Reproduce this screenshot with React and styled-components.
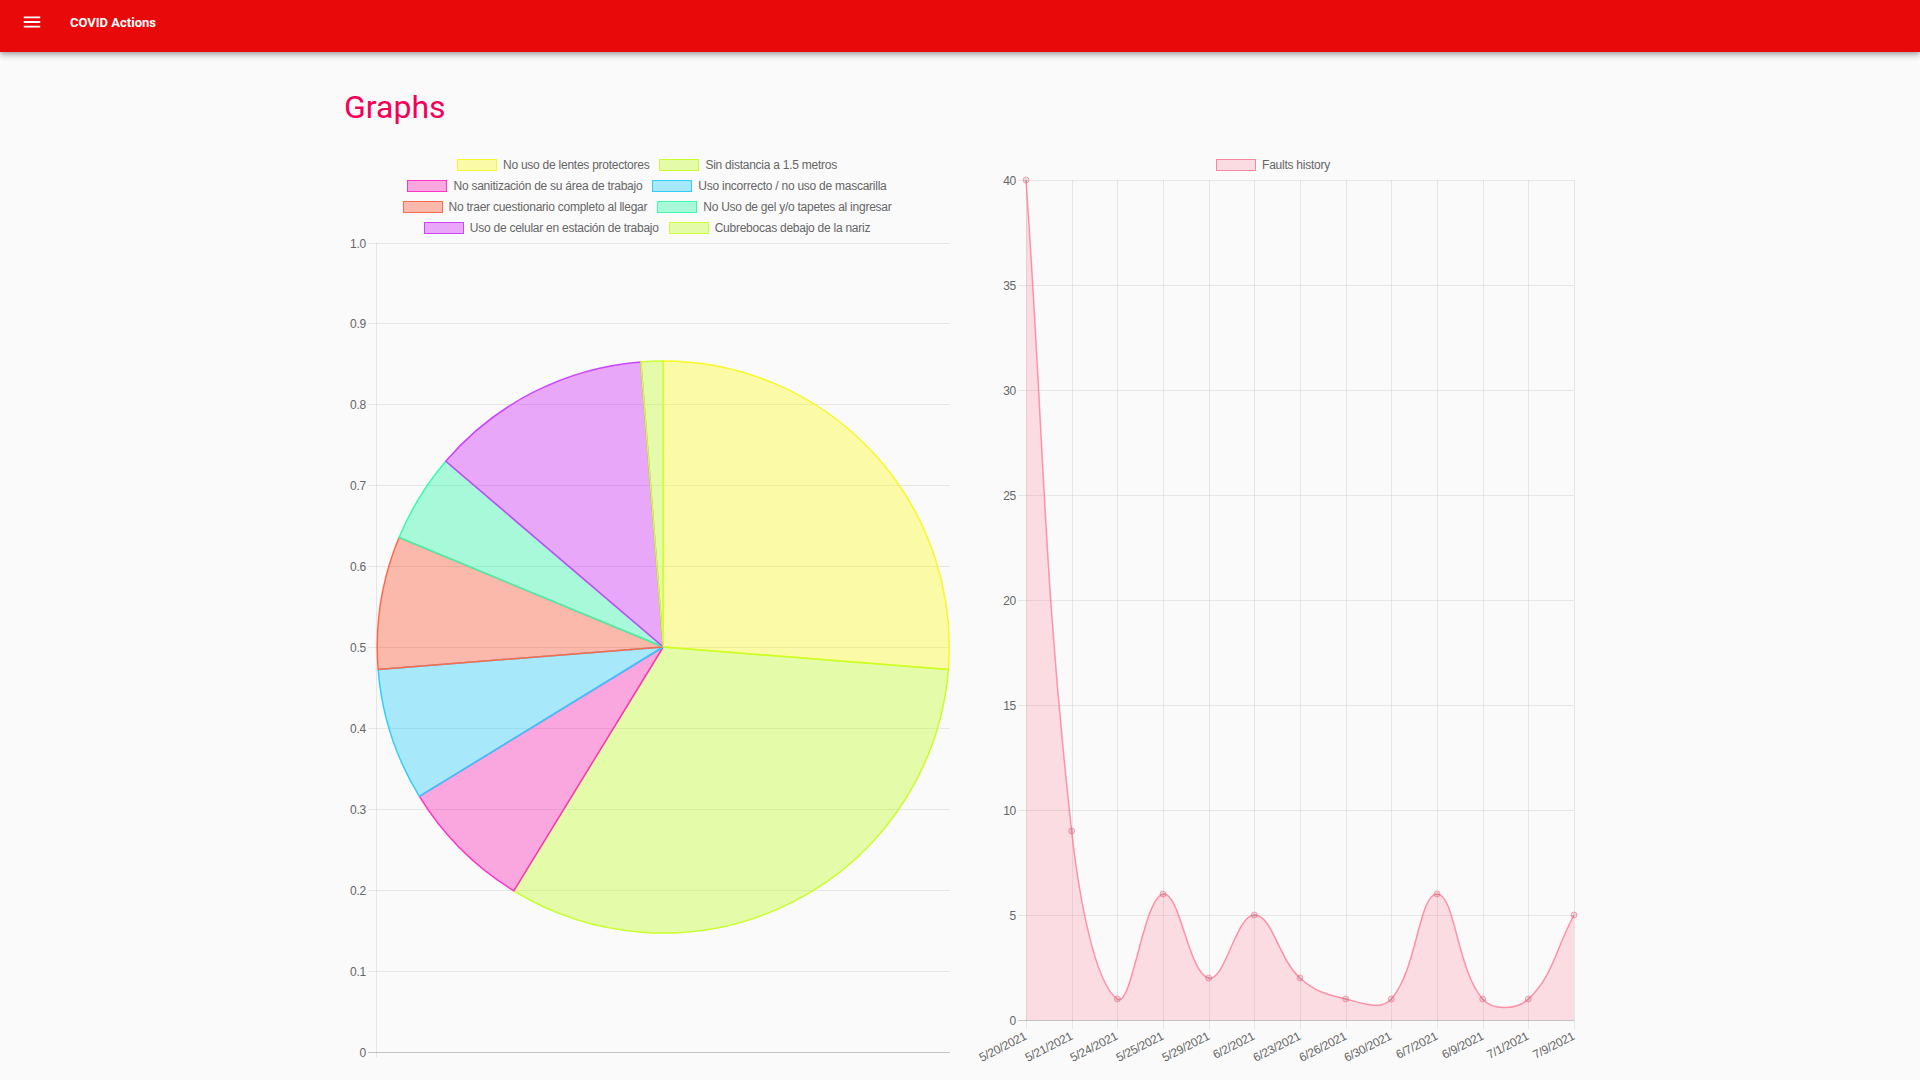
import React from 'react';
import styled, { createGlobalStyle } from 'styled-components';

const GlobalStyle = createGlobalStyle`
  html, body { margin: 0; padding: 0; background: #fafafa; overflow: hidden; }
  body { font-family: Roboto, "Noto Sans", sans-serif; }
  #root { min-height: 100vh; }
`;

const AppBar = styled.header`
  position: relative;
  z-index: 1;
  height: 52px;
  background: #e8090a;
  color: #fff;
  box-shadow: 0 2px 4px -1px rgba(0,0,0,.2), 0 4px 5px 0 rgba(0,0,0,.14), 0 1px 10px 0 rgba(0,0,0,.12);
`;

const Toolbar = styled.div`
  display: flex;
  align-items: center;
  height: 44px;
  padding-left: 21px;
  gap: 27px;
`;

const MenuButton = styled.span`
  display: flex;
  width: 22px;
  height: 22px;
  color: #fff;
`;

const AppTitle = styled.span`
  font: 700 13px/1 Roboto, sans-serif;
  color: #fff;
`;

const Main = styled.main`
  width: 1232px;
  margin: 0 auto;
`;

const Title = styled.h1`
  margin: 36px 0 0;
  font: 400 32px/1.2 Roboto, sans-serif;
  color: #f50057;
`;

const Charts = styled.section`
  display: grid;
  grid-template-columns: repeat(2, 606px);
  column-gap: 20px;
  margin-top: 14px;
`;

const Card = styled.div`
  display: flex;
  flex-direction: column;
`;

const Legend = styled.div`
  display: flex;
  flex-direction: column;
  align-items: center;
  padding-top: 14px;
`;

const LegendRow = styled.div`
  display: flex;
  align-items: center;
  gap: 10px;
  height: 21px;
`;

const LegendItem = styled.div`
  display: flex;
  align-items: center;
  gap: 6px;
`;

const Swatch = styled.span`
  box-sizing: border-box;
  width: 40px;
  height: 12px;
  border: 1.5px solid ${p => p.$border};
  background: ${p => p.$fill};
`;

const LegendLabel = styled.span`
  font: 12px "Liberation Sans", Arial, sans-serif;
  letter-spacing: -0.25px;
  color: #666;
  white-space: nowrap;
`;

const Plot = styled.svg`
  display: block;
  overflow: visible;
  text {
    font: 12px "Liberation Sans", Arial, sans-serif;
    letter-spacing: -0.25px;
    fill: #666;
  }
`;

const GRID = 'rgba(0,0,0,0.08)';
const ZERO = 'rgba(0,0,0,0.22)';

const categories = [
  { label: 'No uso de lentes protectores', value: 21, fill: 'rgba(255,255,0,0.33)', border: 'rgb(248,248,40)' },
  { label: 'Sin distancia a 1.5 metros', value: 26, fill: 'rgba(185,255,10,0.33)', border: 'rgb(200,255,40)' },
  { label: 'No sanitización de su área de trabajo', value: 6, fill: 'rgba(255,0,171,0.33)', border: 'rgb(255,50,200)' },
  { label: 'Uso incorrecto / no uso de mascarilla', value: 6, fill: 'rgba(0,198,255,0.33)', border: 'rgb(50,205,255)' },
  { label: 'No traer cuestionario completo al llegar', value: 6, fill: 'rgba(255,55,15,0.33)', border: 'rgb(255,105,75)' },
  { label: 'No Uso de gel y/o tapetes al ingresar', value: 4, fill: 'rgba(0,248,153,0.33)', border: 'rgb(60,250,175)' },
  { label: 'Uso de celular en estación de trabajo', value: 10, fill: 'rgba(198,0,248,0.33)', border: 'rgb(205,70,255)' },
  { label: 'Cubrebocas debajo de la nariz', value: 1, fill: 'rgba(185,255,10,0.33)', border: 'rgb(205,255,50)' },
];

const history = [
  ['5/20/2021', 40], ['5/21/2021', 9], ['5/24/2021', 1], ['5/25/2021', 6],
  ['5/29/2021', 2], ['6/2/2021', 5], ['6/23/2021', 2], ['6/26/2021', 1],
  ['6/30/2021', 1], ['6/7/2021', 6], ['6/9/2021', 1], ['7/1/2021', 1], ['7/9/2021', 5],
];

function chunk(arr, n) {
  const out = [];
  for (let i = 0; i < arr.length; i += n) out.push(arr.slice(i, i + n));
  return out;
}

function ChartLegend({ rows }) {
  return (
    <Legend>
      {rows.map((row, i) => (
        <LegendRow key={i}>
          {row.map(item => (
            <LegendItem key={item.label}>
              <Swatch $fill={item.fill} $border={item.border} />
              <LegendLabel>{item.label}</LegendLabel>
            </LegendItem>
          ))}
        </LegendRow>
      ))}
    </Legend>
  );
}

function MenuIcon() {
  return (
    <svg width="22" height="22" viewBox="0 0 24 24" fill="currentColor">
      <path d="M3 18h18v-2H3v2zm0-5h18v-2H3v2zm0-7v2h18V6H3z" />
    </svg>
  );
}

function PieChart() {
  const W = 606, H = 827;
  const axisX = 32.5, right = 606, top = 4.5, bottom = 813.5;
  const ticks = Array.from({ length: 11 }, (_, i) => i / 10);
  const cx = (axisX + right) / 2;
  const cy = (top + bottom) / 2;
  const r = 286;
  const total = categories.reduce((s, c) => s + c.value, 0);
  let angle = -Math.PI / 2;
  const slices = categories.map(c => {
    const a0 = angle;
    const a1 = angle + (c.value / total) * Math.PI * 2;
    angle = a1;
    const x0 = cx + r * Math.cos(a0), y0 = cy + r * Math.sin(a0);
    const x1 = cx + r * Math.cos(a1), y1 = cy + r * Math.sin(a1);
    const large = a1 - a0 > Math.PI ? 1 : 0;
    return { ...c, d: `M${cx} ${cy} L${x0} ${y0} A${r} ${r} 0 ${large} 1 ${x1} ${y1} Z` };
  });
  return (
    <Plot width={W} height={H} viewBox={`0 0 ${W} ${H}`}>
      {ticks.map(v => {
        const y = Math.round(bottom - v * (bottom - top)) + 0.5;
        return (
          <g key={v}>
            <line x1={24} x2={right} y1={y} y2={y} stroke={v === 0 ? ZERO : GRID} strokeWidth="1" />
            <text x={22} y={y} dy="0.35em" textAnchor="end">{v === 0 ? '0' : v.toFixed(1)}</text>
          </g>
        );
      })}
      <line x1={axisX} x2={axisX} y1={top} y2={bottom + 6} stroke={GRID} />
      {slices.map(s => (
        <path key={s.label} d={s.d} fill={s.fill} stroke={s.border} strokeWidth="1.5" strokeLinejoin="round" />
      ))}
    </Plot>
  );
}

function splineCurve(prev, cur, next, t) {
  const d01 = Math.hypot(cur.x - prev.x, cur.y - prev.y);
  const d12 = Math.hypot(next.x - cur.x, next.y - cur.y);
  let s01 = d01 / (d01 + d12);
  let s12 = d12 / (d01 + d12);
  if (isNaN(s01)) s01 = 0;
  if (isNaN(s12)) s12 = 0;
  const fa = t * s01, fb = t * s12;
  return {
    prev: { x: cur.x - fa * (next.x - prev.x), y: cur.y - fa * (next.y - prev.y) },
    next: { x: cur.x + fb * (next.x - prev.x), y: cur.y + fb * (next.y - prev.y) },
  };
}

function LineChart() {
  const W = 606, H = 890;
  const axisX = 56, right = 604, top = 5, bottom = 845;
  const max = 40;
  const step = (right - axisX) / (history.length - 1);
  const yOf = v => bottom - (v / max) * (bottom - top);
  const pts = history.map(([, v], i) => ({ x: axisX + i * step, y: yOf(v) }));
  const clampX = x => Math.min(Math.max(x, axisX), right);
  const clampY = y => Math.min(Math.max(y, top), bottom);
  const cps = pts.map((p, i) => {
    const c = splineCurve(pts[i - 1] || p, p, pts[i + 1] || p, 0.4);
    return {
      prev: { x: clampX(c.prev.x), y: clampY(c.prev.y) },
      next: { x: clampX(c.next.x), y: clampY(c.next.y) },
    };
  });
  let d = `M${pts[0].x} ${pts[0].y}`;
  for (let i = 1; i < pts.length; i++) {
    const a = cps[i - 1].next, b = cps[i].prev, p = pts[i];
    d += ` C${a.x} ${a.y} ${b.x} ${b.y} ${p.x} ${p.y}`;
  }
  const area = `${d} L${pts[pts.length - 1].x} ${bottom} L${pts[0].x} ${bottom} Z`;
  const yTicks = Array.from({ length: 9 }, (_, i) => i * 5);
  return (
    <Plot width={W} height={H} viewBox={`0 0 ${W} ${H}`}>
      {yTicks.map(v => {
        const y = Math.round(yOf(v)) + 0.5;
        return (
          <g key={v}>
            <line x1={48} x2={right} y1={y} y2={y} stroke={v === 0 ? ZERO : GRID} />
            <text x={46} y={y} dy="0.35em" textAnchor="end">{v}</text>
          </g>
        );
      })}
      {history.map(([label], i) => {
        const x = Math.round(axisX + i * step) + 0.5;
        return (
          <g key={label}>
            <line x1={x} x2={x} y1={top} y2={bottom + 9} stroke={GRID} />
            <text transform={`translate(${x - 1} ${bottom + 15}) rotate(-27)`} textAnchor="end" dy="0.35em">{label}</text>
          </g>
        );
      })}
      <path d={area} fill="rgba(255,99,132,0.2)" />
      <path d={d} fill="none" stroke="rgba(255,99,132,0.65)" strokeWidth="1.5" />
      {pts.map((p, i) => (
        <circle key={i} cx={p.x} cy={p.y} r="3" fill="rgba(0,0,0,0.1)" stroke="rgba(255,99,132,0.55)" strokeWidth="1" />
      ))}
    </Plot>
  );
}

export default function App() {
  return (
    <>
      <GlobalStyle />
      <AppBar>
        <Toolbar>
          <MenuButton><MenuIcon /></MenuButton>
          <AppTitle>COVID Actions</AppTitle>
        </Toolbar>
      </AppBar>
      <Main>
        <Title>Graphs</Title>
        <Charts>
          <Card>
            <ChartLegend rows={chunk(categories, 2)} />
            <PieChart />
          </Card>
          <Card>
            <ChartLegend rows={[[{ label: 'Faults history', fill: 'rgba(255,99,132,0.2)', border: 'rgba(255,99,132,0.7)' }]]} />
            <LineChart />
          </Card>
        </Charts>
      </Main>
    </>
  );
}
